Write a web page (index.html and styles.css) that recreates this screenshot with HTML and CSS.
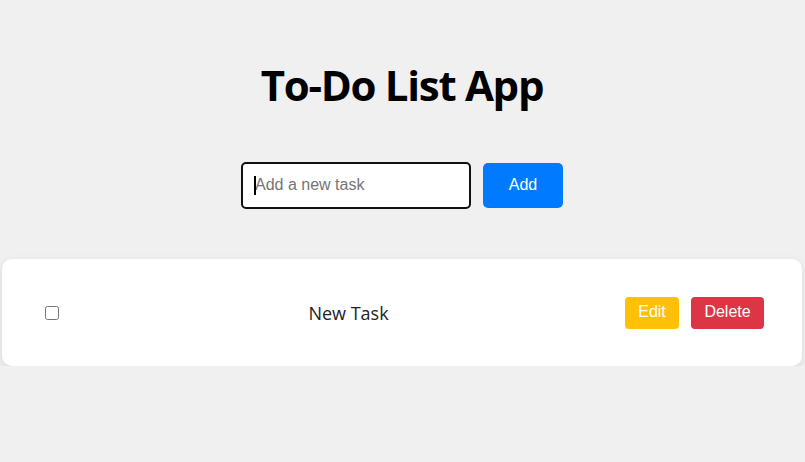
FILE: index.html
```html
<!DOCTYPE html>
<html lang="en">
<head>
<meta charset="utf-8">
<title>To-Do List App</title>
<link rel="stylesheet" href="styles.css">
</head>
<body>
<div class="app">
  <h1 class="title">To-Do List App</h1>
  <div class="entry">
    <div class="field">
      <input class="task-input" type="text" placeholder="Add a new task">
      <span class="caret"></span>
    </div>
    <button class="btn btn-add">Add</button>
  </div>
  <ul class="list">
    <li class="item">
      <input class="check" type="checkbox">
      <span class="label">New Task</span>
      <div class="actions">
        <button class="btn btn-edit">Edit</button>
        <button class="btn btn-delete">Delete</button>
      </div>
    </li>
  </ul>
</div>
</body>
</html>
```
FILE: styles.css
```css
* { box-sizing: border-box; }
html, body { margin: 0; padding: 0; }
body {
  background: #f0f0f0;
  font-family: "Open Sans", "Noto Sans", sans-serif;
  color: #000;
}
.app {
  display: flex;
  flex-direction: column;
  align-items: center;
  padding-top: 60px;
  padding-right: 1px;
}
.title {
  margin: 0;
  font-size: 42px;
  font-weight: 700;
  line-height: 50px;
  letter-spacing: -1.3px;
}
.entry {
  display: flex;
  align-items: center;
  gap: 12px;
  margin-top: 52px;
}
.field { position: relative; }
.task-input {
  display: block;
  width: 230px;
  height: 47px;
  border: 2px solid #111;
  border-radius: 5px;
  padding: 0 12px 1px;
  font-family: "Liberation Sans", Arial, sans-serif;
  font-size: 16px;
  background: #fff;
  outline: none;
}
.task-input::placeholder { color: #757575; }
.caret {
  position: absolute;
  left: 13px;
  top: 14px;
  width: 2px;
  height: 19px;
  background: #000;
}
.btn {
  border: none;
  color: #fff;
  font-family: "Liberation Sans", Arial, sans-serif;
  font-size: 16px;
  padding: 0 0 1px;
  cursor: pointer;
}
.btn-add {
  width: 80px;
  height: 45px;
  background: #007bff;
  border-radius: 5px;
}
.list {
  list-style: none;
  margin: 50px 0 0;
  padding: 0;
  width: 800px;
}
.item {
  display: flex;
  align-items: center;
  height: 107px;
  background: #fff;
  border-radius: 10px;
  box-shadow: 0 3px 10px rgba(0,0,0,0.1);
  padding: 0 38px 0 39px;
}
.check {
  width: 14px;
  height: 14px;
  margin: 0 3px 0 4px;
}
.label {
  flex: 1;
  text-align: center;
  margin-left: 10px;
  font-size: 18px;
  color: #222;
}
.actions {
  display: flex;
  gap: 12px;
}
.btn-edit {
  width: 54px;
  height: 32px;
  background: #ffc107;
  border-radius: 4px;
}
.btn-delete {
  width: 73px;
  height: 32px;
  background: #dc3545;
  border-radius: 4px;
}
```
